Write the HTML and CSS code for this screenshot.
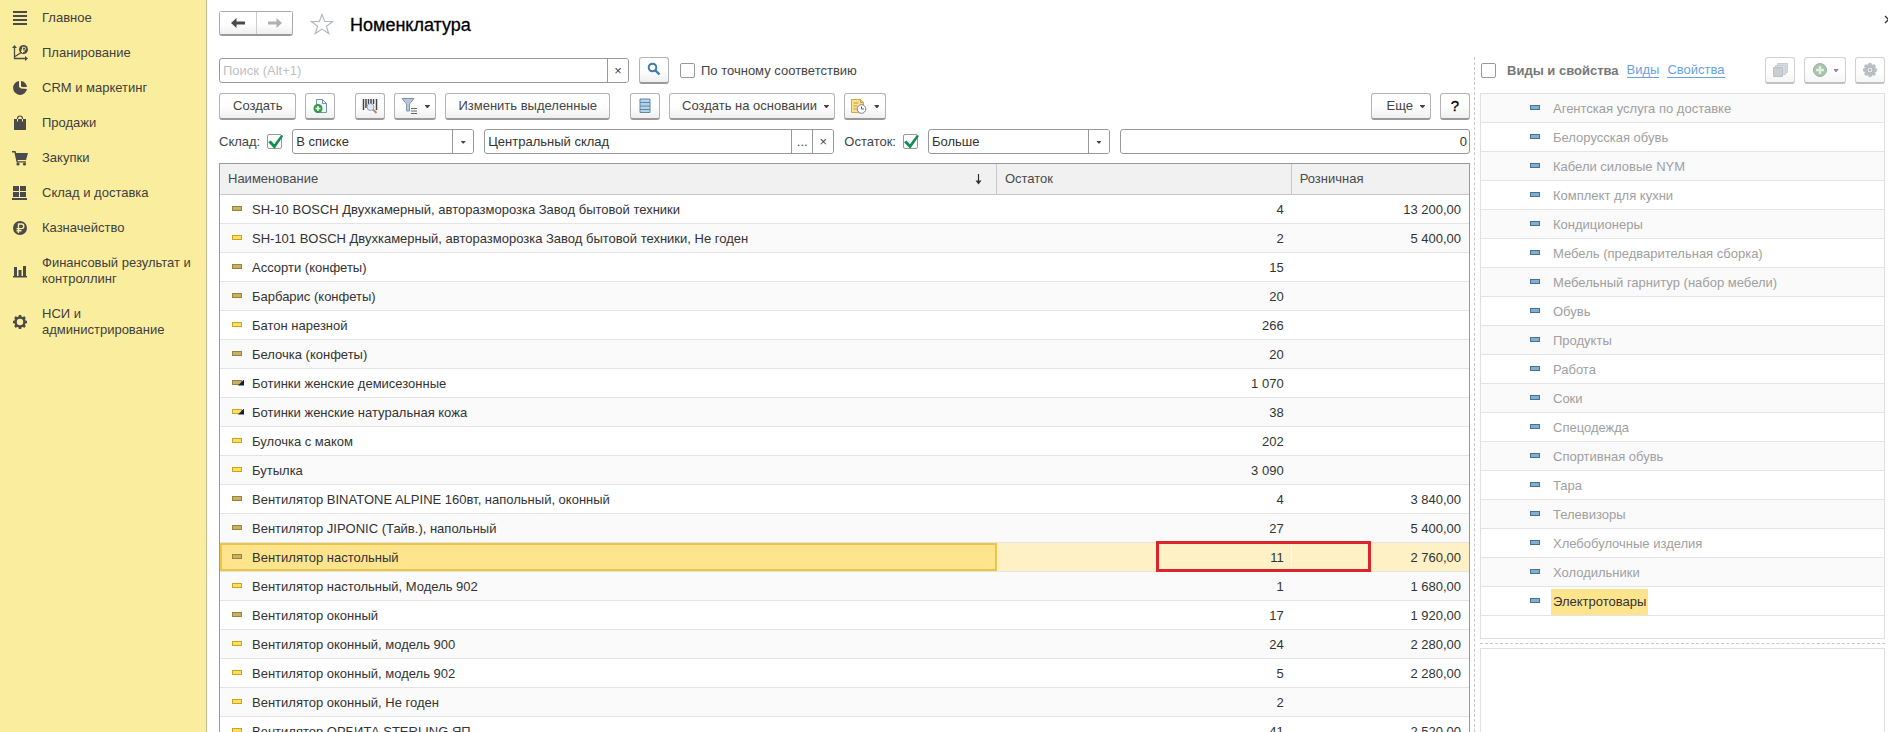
FILE: index.html
```
<!DOCTYPE html>
<html lang="ru">
<head>
<meta charset="utf-8">
<title>Номенклатура</title>
<link rel="stylesheet" href="styles.css">
</head>
<body>
<div class="app">
  <nav class="sidebar">
    <a class="nav-item" href="#"><svg class="nav-icon" viewBox="0 0 16 16"><path d="M1 2h14M1 6h14M1 10h14M1 14h14" stroke="currentColor" stroke-width="2"/></svg><span>Главное</span></a>
    <a class="nav-item" href="#"><svg class="nav-icon" viewBox="0 0 16 16"><path d="M2.500 2v11.500H14M3 11.500l4-2.500 4-3" fill="none" stroke="currentColor" stroke-width="1.300"/><path d="M2.500 0L5 3H0zM16 13.500L13 11v5z" fill="currentColor"/><circle cx="11.500" cy="4.500" r="4.500" fill="currentColor"/><path d="M10.500 8V2.200h1.700a1.400 1.400 0 0 1 0 2.900H9M9 6.500h3.500" fill="none" stroke="#fbed9e" stroke-width="1"/></svg><span>Планирование</span></a>
    <a class="nav-item" href="#"><svg class="nav-icon" viewBox="0 0 16 16"><path d="M7 1a7 7 0 1 0 8 8l-6-.500L7 7z" fill="currentColor"/><path d="M9 1v5l1 1h5a6.500 6.500 0 0 0-6-6z" fill="currentColor"/></svg><span>CRM и маркетинг</span></a>
    <a class="nav-item" href="#"><svg class="nav-icon" viewBox="0 0 16 16"><path d="M2 4h12v11H2z" fill="currentColor"/><path d="M5.500 4V3.500a2.500 2.500 0 0 1 5 0V4" fill="none" stroke="currentColor" stroke-width="1.200"/><path d="M5.500 4v2.500M10.500 4v2.500" stroke="#fbed9e" stroke-width="1"/></svg><span>Продажи</span></a>
    <a class="nav-item" href="#"><svg class="nav-icon" viewBox="0 0 16 16"><path d="M0 1h3.500l.700 2H16l-2 7H5.500l.300 1.300H14V12.500H4.600L2.400 2.500H0z" fill="currentColor"/><circle cx="6" cy="14" r="1.600" fill="currentColor"/><circle cx="12.500" cy="14" r="1.600" fill="currentColor"/></svg><span>Закупки</span></a>
    <a class="nav-item" href="#"><svg class="nav-icon" viewBox="0 0 16 16"><path d="M1 1h6v5H1zM8 1h6v5H8zM1 7h6v5H1zM8 7h6v5H8zM0 13h15v2H0z" fill="currentColor"/></svg><span>Склад и доставка</span></a>
    <a class="nav-item" href="#"><svg class="nav-icon" viewBox="0 0 16 16"><circle cx="8" cy="8" r="7" fill="currentColor"/><path d="M6.500 13V4h3a2.300 2.300 0 0 1 0 4.600H4.500M4.500 10.700h5" fill="none" stroke="#fbed9e" stroke-width="1.400"/></svg><span>Казначейство</span></a>
    <a class="nav-item" href="#"><svg class="nav-icon" viewBox="0 0 16 16"><path d="M2 4h3v9H2zM6.500 7h3v6h-3zM11 3h3v10h-3zM1 13h14v1.500H1z" fill="currentColor"/></svg><span>Финансовый результат и контроллинг</span></a>
    <a class="nav-item" href="#"><svg class="nav-icon" viewBox="0 0 16 16"><circle cx="8" cy="8" r="4.500" fill="none" stroke="currentColor" stroke-width="2.600"/><path d="M8 1v2.500M8 12.500V15M1 8h2.500M12.500 8H15M3 3l1.800 1.800M11.200 11.200L13 13M3 13l1.800-1.800M11.200 4.800L13 3" stroke="currentColor" stroke-width="2.600"/></svg><span>НСИ и администрирование</span></a>
  </nav>

  <div class="workspace">
    <header class="title-bar">
      <div class="history">
        <button class="history-btn" aria-label="Назад"><svg width="14" height="12" viewBox="0 0 14 12"><path d="M0 6l5.500-5v3.500H14v3H5.500V11z" fill="#4a4a4a"/></svg></button>
        <button class="history-btn" aria-label="Вперед"><svg width="14" height="12" viewBox="0 0 14 12"><path d="M14 6L8.500 1v3.500H0v3h8.500V11z" fill="#b0b0b0"/></svg></button>
      </div>
      <button class="plain-btn" aria-label="Избранное"><svg width="24" height="22" viewBox="0 0 24 22"><path d="M12 1.500l2.700 7h8l-6.300 4.800 2.300 7.200-6.700-4.400-6.700 4.400 2.300-7.200L1.300 8.500h8z" fill="#fff" stroke="#b4b8bc" stroke-width="1.200"/></svg></button>
      <h1 class="title">Номенклатура</h1>
      <button class="plain-btn close" aria-label="Закрыть"><svg width="9" height="9" viewBox="0 0 9 9"><path d="M1 1l7 7M8 1L1 8" stroke="#333" stroke-width="1.300"/></svg></button>
    </header>

    <div class="columns">
      <main class="catalog">
        <div class="bar">
          <div class="field search">
            <input class="field-input" type="text" placeholder="Поиск (Alt+1)" aria-label="Поиск">
            <button class="field-btn" aria-label="Очистить поиск">×</button>
          </div>
          <button class="btn icon-btn" aria-label="Найти"><svg width="16" height="16" viewBox="0 0 16 16"><circle cx="6.500" cy="5.500" r="3.800" fill="none" stroke="#3d7cb0" stroke-width="2"/><path d="M9.300 8.300l4.200 4.200" stroke="#3d7cb0" stroke-width="2.400"/></svg></button>
          <label class="check-label"><input class="check" type="checkbox"><span>По точному соответствию</span></label>
        </div>

        <div class="bar commands">
          <button class="btn create">Создать</button>
          <button class="btn icon-btn" aria-label="Создать копированием"><svg width="16" height="16" viewBox="0 0 16 16"><path d="M4.500 1.500h6l4 4v9h-10z" fill="#f0f5fa" stroke="#7890a8"/><path d="M10.500 1.500v4h4" fill="none" stroke="#7890a8"/><circle cx="6" cy="10.500" r="4.500" fill="#2f9a45"/><path d="M6 8v5M3.500 10.500h5" stroke="#fff" stroke-width="1.400"/></svg></button>
          <button class="btn icon-btn spaced" aria-label="Поиск по штрихкоду"><svg width="16" height="16" viewBox="0 0 16 16"><path d="M1.500 1v11M4 1v9M6.500 1v5M9 1v5M11.500 1v5M14.500 1v11" stroke="#444" stroke-width="1.500"/><circle cx="8.500" cy="9" r="3.500" fill="#dceafa" stroke="#8aa5c2"/><path d="M11 11.500l3.500 3.500" stroke="#b98a62" stroke-width="2"/></svg></button>
          <button class="btn menu-btn" aria-label="Фильтр"><svg width="18" height="16" viewBox="0 0 18 16"><path d="M1 .500h12L8.500 6v7h-3V6z" fill="#b7c8da" stroke="#8295a9"/><path d="M10 10.500h6M10 13h6M10 15.500h6" stroke="#666"/></svg><span class="caret"></span></button>
          <button class="btn edit">Изменить выделенные</button>
          <button class="btn icon-btn spaced" aria-label="Список"><svg width="12" height="16" viewBox="0 0 12 16"><path d="M1 1h10v13.500H1z" fill="#b4d3e8" stroke="#5e88a8"/><path d="M1 4.500h10M1 8h10M1 11.500h10" stroke="#5e88a8"/></svg></button>
          <button class="btn based">Создать на основании<span class="caret"></span></button>
          <button class="btn menu-btn" aria-label="Отчеты"><svg width="18" height="16" viewBox="0 0 18 16"><path d="M1.500 1.500h9l3 3v10h-12z" fill="#fae190" stroke="#d1a94b"/><path d="M10.500 1.500v3h3M3.500 5h5M3.500 8h4M3.500 11h3" fill="none" stroke="#c99e3e"/><circle cx="11.500" cy="11" r="4.300" fill="#fff" stroke="#7c7fa5"/><path d="M11.500 8.500V11H14" fill="none" stroke="#5a5d90"/></svg><span class="caret"></span></button>
          <button class="btn more">Еще<span class="caret"></span></button>
          <button class="btn icon-btn help">?</button>
        </div>

        <div class="bar filters">
          <label class="check-label filter-label"><span>Склад:</span><input class="check" type="checkbox" checked></label>
          <div class="field picker"><select class="field-input" aria-label="Вид сравнения склада"><option>В списке</option></select><span class="field-btn"><span class="caret"></span></span></div>
          <div class="field value"><input class="field-input" type="text" value="Центральный склад" aria-label="Значение склада"><button class="field-btn" aria-label="Выбрать">...</button><button class="field-btn" aria-label="Очистить">×</button></div>
          <label class="check-label filter-label"><span>Остаток:</span><input class="check" type="checkbox" checked></label>
          <div class="field picker"><select class="field-input" aria-label="Вид сравнения остатка"><option>Больше</option></select><span class="field-btn"><span class="caret"></span></span></div>
          <div class="field value"><input class="field-input number" type="text" value="0" aria-label="Значение остатка"></div>
        </div>

        <div class="grid">
          <table class="items">
            <colgroup><col class="col-name"><col class="col-stock"><col class="col-price"></colgroup>
            <thead><tr><th><span class="sorted">Наименование<svg width="7" height="11" viewBox="0 0 7 11"><path d="M3.500 0v9" stroke="#333" stroke-width="1.200"/><path d="M.500 6.500h6l-3 4z" fill="#333"/></svg></span></th><th>Остаток</th><th>Розничная</th></tr></thead>
            <tbody>
              <tr><td><i class="mark dark"></i>SH-10 BOSCH Двухкамерный, авторазморозка Завод бытовой техники</td><td>4</td><td>13 200,00</td></tr>
              <tr><td><i class="mark"></i>SH-101 BOSCH Двухкамерный, авторазморозка Завод бытовой техники, Не годен</td><td>2</td><td>5 400,00</td></tr>
              <tr><td><i class="mark dark"></i>Ассорти (конфеты)</td><td>15</td><td></td></tr>
              <tr><td><i class="mark dark"></i>Барбарис (конфеты)</td><td>20</td><td></td></tr>
              <tr><td><i class="mark"></i>Батон нарезной</td><td>266</td><td></td></tr>
              <tr><td><i class="mark dark"></i>Белочка (конфеты)</td><td>20</td><td></td></tr>
              <tr><td><i class="mark dark variant"></i>Ботинки женские демисезонные</td><td>1 070</td><td></td></tr>
              <tr><td><i class="mark variant"></i>Ботинки женские натуральная кожа</td><td>38</td><td></td></tr>
              <tr><td><i class="mark"></i>Булочка с маком</td><td>202</td><td></td></tr>
              <tr><td><i class="mark"></i>Бутылка</td><td>3 090</td><td></td></tr>
              <tr><td><i class="mark dark"></i>Вентилятор BINATONE ALPINE 160вт, напольный, оконный</td><td>4</td><td>3 840,00</td></tr>
              <tr><td><i class="mark dark"></i>Вентилятор JIPONIC (Тайв.), напольный</td><td>27</td><td>5 400,00</td></tr>
              <tr class="current"><td><i class="mark dark"></i>Вентилятор настольный</td><td>11<span class="callout"></span></td><td>2 760,00</td></tr>
              <tr><td><i class="mark"></i>Вентилятор настольный, Модель 902</td><td>1</td><td>1 680,00</td></tr>
              <tr><td><i class="mark dark"></i>Вентилятор оконный</td><td>17</td><td>1 920,00</td></tr>
              <tr><td><i class="mark"></i>Вентилятор оконный, модель 900</td><td>24</td><td>2 280,00</td></tr>
              <tr><td><i class="mark"></i>Вентилятор оконный, модель 902</td><td>5</td><td>2 280,00</td></tr>
              <tr><td><i class="mark"></i>Вентилятор оконный, Не годен</td><td>2</td><td></td></tr>
              <tr><td><i class="mark"></i>Вентилятор ОРБИТА,STERLING,ЯП.</td><td>41</td><td>2 520,00</td></tr>
            </tbody>
          </table>
        </div>
      </main>

      <aside class="kinds">
        <div class="kinds-bar">
          <label class="check-label kinds-title"><input class="check" type="checkbox"><span>Виды и свойства</span></label>
          <a class="link" href="#">Виды</a>
          <a class="link" href="#">Свойства</a>
          <div class="kinds-actions">
            <button class="btn icon-btn" aria-label="Копировать" disabled><svg width="16" height="16" viewBox="0 0 16 16"><path d="M5.500 1.500h10v9h-10z" fill="#bcc5cb" stroke="#a3acb3"/><path d="M3.500 3.500h10v9h-10z" fill="#bcc5cb" stroke="#a3acb3"/><path d="M1.500 5.500h9v9h-9z" fill="#a6afb5" stroke="#8d979e"/></svg></button>
            <button class="btn menu-btn" aria-label="Добавить" disabled><svg width="16" height="16" viewBox="0 0 16 16"><circle cx="8" cy="8" r="6.500" fill="#6f9e75" stroke="#5c8362"/><path d="M8 4v8M4 8h8" stroke="#cfe6cf" stroke-width="2.400"/></svg><span class="caret"></span></button>
            <button class="btn icon-btn" aria-label="Настройки" disabled><svg width="16" height="16" viewBox="0 0 16 16"><g fill="#8d959e"><circle cx="8" cy="8" r="5.500"/><circle cx="8" cy="2.800" r="2"/><circle cx="8" cy="13.200" r="2"/><circle cx="2.800" cy="8" r="2"/><circle cx="13.200" cy="8" r="2"/><circle cx="4.300" cy="4.300" r="2"/><circle cx="11.700" cy="4.300" r="2"/><circle cx="4.300" cy="11.700" r="2"/><circle cx="11.700" cy="11.700" r="2"/></g><circle cx="8" cy="8" r="3" fill="#d4d8dc" stroke="#7d858d"/><circle cx="8" cy="8" r="1.200" fill="#7d858d"/></svg></button>
          </div>
        </div>
        <ul class="kinds-list">
          <li>Агентская услуга по доставке</li>
          <li>Белорусская обувь</li>
          <li>Кабели силовые NYM</li>
          <li>Комплект для кухни</li>
          <li>Кондиционеры</li>
          <li>Мебель (предварительная сборка)</li>
          <li>Мебельный гарнитур (набор мебели)</li>
          <li>Обувь</li>
          <li>Продукты</li>
          <li>Работа</li>
          <li>Соки</li>
          <li>Спецодежда</li>
          <li>Спортивная обувь</li>
          <li>Тара</li>
          <li>Телевизоры</li>
          <li>Хлебобулочные изделия</li>
          <li>Холодильники</li>
          <li><span class="selected">Электротовары</span></li>
        </ul>
        <div class="splitter"></div>
        <div class="details"></div>
      </aside>
    </div>
  </div>
</div>
</body>
</html>
```
FILE: styles.css
```
*, *::before, *::after { box-sizing: border-box; }

body {
  margin: 0;
  font: 13px/16px "Liberation Sans", Arial, sans-serif;
  color: #333;
  background: #fff;
}

button, input, select { font: inherit; color: inherit; }
svg { display: block; flex: none; }

.app { display: flex; height: 100vh; overflow: hidden; }

/* Sections panel */
.sidebar {
  flex: none;
  width: 207px;
  background: #fbed9e;
  border-right: 1px solid #c0b88c;
}
.nav-item {
  display: flex;
  align-items: center;
  gap: 14px;
  padding: 10px 12px 9px;
  color: #404040;
  text-decoration: none;
}
.nav-icon { width: 16px; height: 16px; color: #4a4a4a; }

/* Working area */
.workspace {
  flex: 1;
  min-width: 0;
  display: flex;
  flex-direction: column;
  padding-left: 12px;
}
.title-bar {
  flex: none;
  display: flex;
  align-items: center;
  height: 47px;
  gap: 17px;
  overflow: hidden;
}
.history {
  display: flex;
  height: 25px;
  border: 1px solid #aaa;
  border-bottom: 2px solid #999;
  border-radius: 3px;
}
.history-btn {
  display: grid;
  place-items: center;
  width: 36px;
  padding: 0;
  border: 0;
  background: linear-gradient(#fff 50%, #f0f0f0);
}
.history-btn + .history-btn { border-left: 1px solid #ccc; }
.plain-btn { padding: 0; border: 0; background: none; }
.title {
  margin: 2px auto 0 -1px;
  font-size: 18px;
  line-height: 24px;
  font-weight: 400;
  color: #000;
  -webkit-text-stroke: 0.3px #000;
}
.close { margin: 0 -5px 8px 0; }

.columns { flex: 1; display: flex; min-height: 0; }

.catalog {
  flex: 1;
  min-width: 0;
  display: flex;
  flex-direction: column;
  gap: 9px;
  padding: 11px 4px 0 0;
}
.bar { flex: none; display: flex; align-items: center; gap: 9px; height: 25px; }
.commands { height: 27px; margin-top: 1px; }
.filters { gap: 10px; }

/* Buttons */
.btn {
  display: flex;
  align-items: center;
  justify-content: center;
  height: 27px;
  padding: 0 12px;
  border: 1px solid #b4b4b4;
  border-bottom: 2px solid #999;
  border-radius: 3px;
  background: linear-gradient(#fff 50%, #efefef);
  color: #444;
  white-space: nowrap;
}
.btn:disabled { opacity: 0.6; }
.icon-btn { width: 30px; padding: 0; }
.menu-btn { gap: 6px; width: 42px; padding: 0; }
.create { padding: 0 13px; }
.based, .more { gap: 7px; padding-right: 5px; }
.spaced { margin-left: 11px; }
.more { margin-left: auto; padding-left: 15px; }
.help { color: #000; font-size: 15px; -webkit-text-stroke: 0.3px #000; }
.caret {
  flex: none;
  width: 5px;
  height: 3px;
  margin-top: 1px;
  background: #444;
  clip-path: polygon(0 0, 100% 0, 100% 20%, 60% 100%, 40% 100%, 0 20%);
}

/* Fields */
.field {
  display: flex;
  height: 25px;
  min-width: 0;
  border: 1px solid #999;
  border-radius: 3px;
  background: #fff;
  overflow: hidden;
}
.field-input {
  flex: 1;
  min-width: 0;
  padding: 0 3px;
  border: 0;
  outline: 0;
  background: none;
  appearance: none;
}
.field-input::placeholder { color: #c0c0c0; }
.field-btn {
  display: grid;
  place-items: center;
  width: 21px;
  padding: 0;
  border: 0;
  border-left: 1px solid #999;
  background: #fff;
  color: #444;
}
.number { padding-right: 2px; text-align: right; }
.search { width: 410px; margin-right: 1px; }
.picker { width: 182px; }
.picker .field-btn { pointer-events: none; }
.value { flex: 1; }

.check-label { display: flex; align-items: center; gap: 6px; color: #444; white-space: nowrap; }
.check {
  appearance: none;
  flex: none;
  display: grid;
  place-items: center;
  width: 15px;
  height: 15px;
  margin: 0 0 0 2px;
  border: 1px solid #999;
  border-radius: 2px;
  background: #fff;
}
.filter-label .check { margin-left: 1px; }
.check:checked::before {
  content: "";
  width: 15px;
  height: 15px;
  background: #109050;
  clip-path: polygon(0 48%, 16% 36%, 40% 62%, 86% 0, 100% 6%, 42% 92%);
}

/* Item list */
.grid {
  flex: 1;
  min-height: 0;
  overflow: hidden;
  border: 1px solid #999;
  border-bottom: 0;
}
.items { width: 100%; table-layout: fixed; border-collapse: separate; border-spacing: 0; }
.col-name { width: 62.2%; }
.col-stock { width: 23.6%; }
.items th {
  height: 31px;
  padding: 0 8px;
  border-right: 1px solid #c8c8c8;
  border-bottom: 1px solid #c8c8c8;
  background: #f1f1f1;
  color: #4a4a4a;
  font-weight: 400;
  text-align: left;
}
.items th:last-child { border-right: 0; }
.sorted { display: flex; align-items: center; justify-content: space-between; padding-right: 6px; }
.items td {
  position: relative;
  height: 29px;
  padding: 1px 8px 0;
  border-bottom: 1px solid #e4e4e4;
  text-align: right;
  white-space: nowrap;
}
.items td:first-child { padding-left: 12px; text-align: left; }
.items tr:nth-child(even) td { background: #fafafa; }
.mark {
  display: inline-block;
  position: relative;
  width: 10px;
  height: 5px;
  margin-right: 10px;
  border: 1px solid #c9a227;
  background: #ffe05a;
  vertical-align: 3px;
}
.dark { border-color: #9a8236; background: #c9b06a; }
.variant::after {
  content: "";
  position: absolute;
  right: -3px;
  bottom: -2px;
  width: 6px;
  height: 6px;
  background: #101c4c;
  clip-path: polygon(100% 0, 100% 100%, 0 100%);
}
.items tr.current td { background: #fdf1c5; }
.items tr.current td:first-child { background: #ffe48e; box-shadow: inset 0 0 0 2px #ecc544; }
.items tr.current td:nth-child(2) { border-right: 1px solid #fff9e2; padding-right: 7px; z-index: 1; }
.callout {
  position: absolute;
  top: -2px;
  right: -80px;
  width: 215px;
  height: 31px;
  border: 3px solid #d9252b;
}

/* Kinds and properties */
.kinds {
  flex: none;
  width: 414px;
  display: flex;
  flex-direction: column;
  margin-top: 10px;
  padding: 0 3px 0 5px;
  border-left: 1px dashed #c8c8c8;
}
.kinds-bar { flex: none; display: flex; align-items: center; gap: 8px; height: 27px; margin-bottom: 9px; }
.kinds-title { gap: 11px; color: #777; font-weight: 700; }
.kinds-title .check { margin-left: 1px; }
.kinds-actions { display: flex; gap: 9px; margin-left: auto; }
.link { color: #6a9fe8; text-decoration: none; border-bottom: 1px solid #6a9fe8; line-height: 14px; }
.kinds-list {
  flex: none;
  margin: 0;
  padding: 0 0 22px;
  border: 1px solid #e0e0e0;
  list-style: none;
  color: #a0a0a0;
}
.kinds-list li {
  display: flex;
  align-items: center;
  gap: 13px;
  height: 29px;
  padding: 1px 0 0 49px;
  border-bottom: 1px solid #e4e4e4;
}
.kinds-list li:nth-child(odd) { background: #fafafa; }
.kinds-list li:last-child { background: #fff; }
.kinds-list li::before {
  content: "";
  width: 10px;
  height: 5px;
  margin-bottom: 3px;
  border: 1px solid #44709a;
  background: #7fb0d0;
}
.selected { margin-left: -2px; padding: 5px 2px; background: #ffe48e; color: #333; }
.splitter { flex: none; height: 9px; padding-top: 4px; }
.splitter::before { content: ""; display: block; border-top: 1px dashed #c8c8c8; }
.details { flex: 1; border: 1px solid #e0e0e0; border-bottom: 0; }
```
